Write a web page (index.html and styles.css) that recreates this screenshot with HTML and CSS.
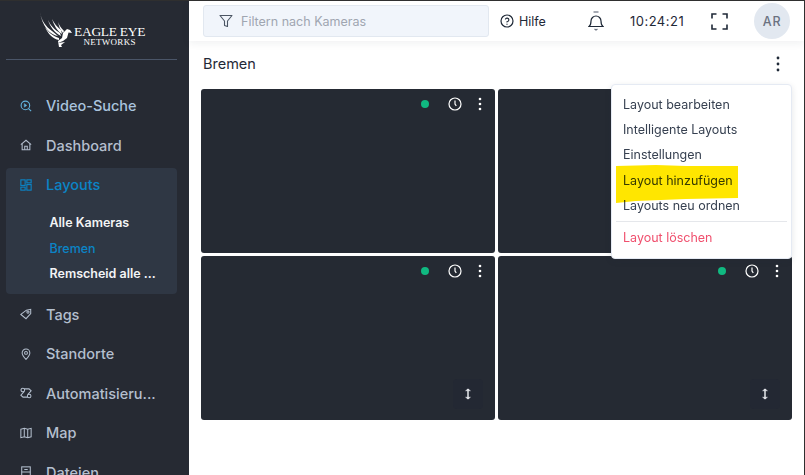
FILE: index.html
```html
<!DOCTYPE html>
<html lang="de">
<head>
<meta charset="utf-8">
<title>Eagle Eye Networks</title>
<link rel="stylesheet" href="styles.css">
</head>
<body>
<div class="shell">
  <aside class="sidebar">
    <div class="brand">
      <svg class="eagle" width="34" height="36" viewBox="0 0 34 36" fill="#fff">
        <path d="M1 0 C2 8 7 15 13 19 L19 24 C11 23 3 14 1 0Z"/>
        <path d="M6 15 C9 20 14 24 20 26 L20 28 C14 27 9 22 6 15Z"/>
        <path d="M9 8 C11 13 16 18 21 21 L22 24 C16 21 11 15 9 8Z"/>
        <path d="M13 7 C15 11 18 15 22 18 L23 22 C18 19 15 13 13 7Z"/>
        <path d="M19 10 C20 13 22 16 25 19 L24 21 C21 18 20 14 19 10Z"/>
        <path d="M24 21 L28 17 L31 18 L33 21 L29.500 20.500 L28 26 L24 29 L19 31 L26 30 L22 33 L23 35 L20 35 L19 29 L23 26 Z"/>
      </svg>
      <div class="wordmark">
        <span class="word-top">EAGLE EYE</span>
        <span class="word-sub">NETWORKS</span>
      </div>
    </div>
    <nav class="nav">
      <a class="nav-item is-search">
        <svg class="nav-icon" viewBox="0 0 14 14" fill="none" stroke="currentColor" stroke-width="1.300"><circle cx="6.300" cy="6.300" r="5"/><path d="M10 10l3 3"/><path d="M5 4.200l3 2.100-3 2.100z" fill="currentColor" stroke-width=".5"/></svg>
        <span>Video-Suche</span>
      </a>
      <a class="nav-item">
        <svg class="nav-icon" viewBox="0 0 14 14" fill="none" stroke="currentColor" stroke-width="1.200"><path d="M1 6.500L7 1.500l6 5"/><path d="M2.500 5.500V12.500h9V5.500"/><path d="M5.500 12.500V8.500h3v4"/></svg>
        <span>Dashboard</span>
      </a>
      <div class="group">
        <a class="nav-item is-active">
          <svg class="nav-icon" viewBox="0 0 14 14" fill="none" stroke="currentColor" stroke-width="1.300"><rect x="1" y="1" width="5" height="6.500"/><rect x="8" y="1" width="5" height="3.500"/><rect x="1" y="9.500" width="5" height="3.500"/><rect x="8" y="6.500" width="5" height="6.500"/></svg>
          <span>Layouts</span>
        </a>
        <ul class="sub">
          <li>Alle Kameras</li>
          <li class="is-current">Bremen</li>
          <li>Remscheid alle ...</li>
        </ul>
      </div>
      <a class="nav-item">
        <svg class="nav-icon" viewBox="0 0 14 14" fill="none" stroke="currentColor" stroke-width="1.200"><path d="M1 7.500L7.500 2.500 12.500 1.500 12.500 6.500 7 12.500z"/><circle cx="9.300" cy="4.800" r="1.300"/></svg>
        <span>Tags</span>
      </a>
      <a class="nav-item">
        <svg class="nav-icon" viewBox="0 0 14 14" fill="none" stroke="currentColor" stroke-width="1.200"><path d="M7 13.300C4 10 2.500 8 2.500 5.700a4.500 4.500 0 0 1 9 0C11.500 8 10 10 7 13.300z"/><circle cx="7" cy="5.700" r="1.700"/></svg>
        <span>Standorte</span>
      </a>
      <a class="nav-item">
        <svg class="nav-icon" viewBox="0 0 14 14" fill="none" stroke="currentColor" stroke-width="1.200"><circle cx="3.300" cy="3.500" r="2.100"/><circle cx="10.700" cy="10.500" r="2.100"/><path d="M5 2.200h5.500L13 4.500 9 9"/><path d="M9 11.800H3.500L1 9.500 5 5"/></svg>
        <span>Automatisieru...</span>
      </a>
      <a class="nav-item">
        <svg class="nav-icon" viewBox="0 0 14 14" fill="none" stroke="currentColor" stroke-width="1.200"><path d="M1 2.500l4-1 4 1 4-1v10l-4 1-4-1-4 1z"/><path d="M5 1.500v10M9 2.500v10"/></svg>
        <span>Map</span>
      </a>
      <a class="nav-item">
        <svg class="nav-icon" viewBox="0 0 14 14" fill="none" stroke="currentColor" stroke-width="1.200"><rect x="2" y="1" width="10" height="12"/><path d="M2 7h10M5 4h4"/></svg>
        <span>Dateien</span>
      </a>
    </nav>
  </aside>

  <div class="main">
    <header class="topbar">
      <label class="filter">
        <svg class="filter-icon" width="14" height="14" viewBox="0 0 14 14" fill="none" stroke="#4b5563" stroke-width="1.100" stroke-linejoin="round"><path d="M1 1.500h12L8.500 7v5.500l-3-1V7z"/></svg>
        <span>Filtern nach Kameras</span>
      </label>
      <div class="help">
        <svg width="14" height="14" viewBox="0 0 14 14" fill="none" stroke="#1f2937" stroke-width="1.200"><circle cx="7" cy="7" r="6"/><path d="M5.300 5.500A1.800 1.800 0 1 1 7 7.700v.8" stroke-width="1.100"/><circle cx="7" cy="10.200" r=".4" stroke-width=".6"/></svg>
        <span>Hilfe</span>
      </div>
      <svg class="bell" width="16" height="20" viewBox="0 0 16 20" fill="none" stroke="#1f2937" stroke-width="1.200"><path d="M5.500 1h5" stroke="#6b7280"/><path d="M1 15.500c1.500-1 2-2.500 2-5.500a5 5 0 0 1 10 0c0 3 .5 4.500 2 5.500z"/><path d="M6.500 18l1.500 1 1.500-1" stroke="#6b7280"/></svg>
      <time class="clock">10:24:21</time>
      <svg class="fullscreen" width="17" height="17" viewBox="0 0 17 17" fill="none" stroke="#1f2937" stroke-width="1.600"><path d="M1 5.500V1h4.500M11.500 1H16v4.500M16 11.500V16h-4.500M5.500 16H1v-4.500"/></svg>
      <div class="avatar">AR</div>
    </header>

    <section class="content">
      <div class="title-row">
        <h1>Bremen</h1>
        <svg class="kebab-dark" width="4" height="16" viewBox="0 0 4 16" fill="#1f2937"><circle cx="2" cy="2" r="1.400"/><circle cx="2" cy="8" r="1.400"/><circle cx="2" cy="14" r="1.400"/></svg>
      </div>

      <div class="tiles">
        <article class="tile">
          <div class="tile-top">
            <i class="dot"></i>
            <svg class="clock-icon" width="14" height="14" viewBox="0 0 14 14" fill="none" stroke="#fff" stroke-width="1.200"><circle cx="7" cy="7" r="6"/><path d="M7 3.500V7l1.300 1.800"/></svg>
            <svg class="kebab" width="4" height="14" viewBox="0 0 4 14" fill="#fff"><circle cx="2" cy="2" r="1.300"/><circle cx="2" cy="7" r="1.300"/><circle cx="2" cy="12" r="1.300"/></svg>
          </div>
        </article>
        <article class="tile">
          <div class="tile-top">
            <i class="dot"></i>
            <svg class="clock-icon" width="14" height="14" viewBox="0 0 14 14" fill="none" stroke="#fff" stroke-width="1.200"><circle cx="7" cy="7" r="6"/><path d="M7 3.500V7l1.300 1.800"/></svg>
            <svg class="kebab" width="4" height="14" viewBox="0 0 4 14" fill="#fff"><circle cx="2" cy="2" r="1.300"/><circle cx="2" cy="7" r="1.300"/><circle cx="2" cy="12" r="1.300"/></svg>
          </div>
        </article>
        <article class="tile">
          <div class="tile-top">
            <i class="dot"></i>
            <svg class="clock-icon" width="14" height="14" viewBox="0 0 14 14" fill="none" stroke="#fff" stroke-width="1.200"><circle cx="7" cy="7" r="6"/><path d="M7 3.500V7l1.300 1.800"/></svg>
            <svg class="kebab" width="4" height="14" viewBox="0 0 4 14" fill="#fff"><circle cx="2" cy="2" r="1.300"/><circle cx="2" cy="7" r="1.300"/><circle cx="2" cy="12" r="1.300"/></svg>
          </div>
          <div class="tile-bottom">
            <div class="resize">
              <svg width="8" height="12" viewBox="0 0 8 12" fill="none" stroke="#e5e7eb" stroke-width="1.500"><path d="M4 1v10"/><path d="M1.500 2.800L4 .8 6.500 2.800zM1.500 9.200L4 11.200 6.500 9.200z" fill="#e5e7eb" stroke-width=".4"/></svg>
            </div>
          </div>
        </article>
        <article class="tile">
          <div class="tile-top">
            <i class="dot"></i>
            <svg class="clock-icon" width="14" height="14" viewBox="0 0 14 14" fill="none" stroke="#fff" stroke-width="1.200"><circle cx="7" cy="7" r="6"/><path d="M7 3.500V7l1.300 1.800"/></svg>
            <svg class="kebab" width="4" height="14" viewBox="0 0 4 14" fill="#fff"><circle cx="2" cy="2" r="1.300"/><circle cx="2" cy="7" r="1.300"/><circle cx="2" cy="12" r="1.300"/></svg>
          </div>
          <div class="tile-bottom">
            <div class="resize">
              <svg width="8" height="12" viewBox="0 0 8 12" fill="none" stroke="#e5e7eb" stroke-width="1.500"><path d="M4 1v10"/><path d="M1.500 2.800L4 .8 6.500 2.800zM1.500 9.200L4 11.200 6.500 9.200z" fill="#e5e7eb" stroke-width=".4"/></svg>
            </div>
          </div>
        </article>
      </div>

      <div class="menu">
        <div class="menu-item">Layout bearbeiten</div>
        <div class="menu-item">Intelligente Layouts</div>
        <div class="menu-item">Einstellungen</div>
        <div class="menu-item">Layout hinzufügen</div>
        <div class="menu-item">Layouts neu ordnen</div>
        <hr class="menu-rule">
        <div class="menu-item is-danger">Layout löschen</div>
        <svg class="marker" width="122" height="40" viewBox="0 0 122 40"><path d="M0 1L40 0 70 1 122 1 122 33 70 34 20 36 0 38z" fill="#ffe600"/></svg>
      </div>
    </section>
  </div>
</div>
</body>
</html>
```

FILE: styles.css
```css
* { box-sizing: border-box; }
html, body { margin: 0; height: 100%; overflow: hidden; background: #fff; }
body { font-family: Inter, "Liberation Sans", sans-serif; color: #1f2937; }

.shell {
  display: flex;
  height: 475px;
  border-top: 1px solid #2f2f2f;
  border-right: 1px solid #2f2f2f;
  overflow: hidden;
}

/* Sidebar */
.sidebar {
  flex: 0 0 189px;
  background: #262a33;
  padding: 0 12px 0 6px;
  overflow: hidden;
}
.brand {
  height: 59px;
  display: flex;
  align-items: flex-start;
  padding: 11px 0 0 33px;
  border-bottom: 1px solid #4a5568;
}
.eagle { flex: none; }
.wordmark {
  display: flex;
  flex-direction: column;
  align-items: center;
  margin: 13px 0 0 1px;
  font-family: "Liberation Serif", serif;
  color: #fff;
  line-height: 1;
  white-space: nowrap;
}
.word-top { font-size: 13.500px; letter-spacing: -.3px; height: 12px; }
.word-sub { font-size: 9px; letter-spacing: .3px; margin-top: 1px; }

.nav { padding-top: 26px; }
.nav-item {
  display: flex;
  align-items: center;
  height: 39.500px;
  padding-left: 14px;
  font-size: 14.500px;
  font-weight: 500;
  color: #b4bfce;
  white-space: nowrap;
}
.nav-icon { width: 12px; height: 12px; flex: none; margin-right: 14px; color: #b4bfce; }
.is-search, .is-search .nav-icon { color: #63b3dd; }
.is-search span { color: #a9c3de; }

.group {
  background: #2f3744;
  border-radius: 4px;
  height: 126px;
  margin: 3px 0 .4px;
}
.is-active { color: #0b84c6; height: 33px; }
.is-active .nav-icon { color: #0b84c6; }
.sub {
  list-style: none;
  margin: 0;
  padding: 9px 0 0 43.500px;
  font-size: 12.500px;
  font-weight: 600;
  color: #f3f4f6;
}
.sub li { height: 25.600px; line-height: 25.600px; white-space: nowrap; }
.sub .is-current { color: #0b84c6; font-weight: 500; }

/* Main column */
.main { flex: 1; min-width: 0; display: flex; flex-direction: column; }
.topbar {
  flex: none;
  height: 40px;
  display: flex;
  align-items: center;
  padding-left: 14px;
  background: #fff;
  box-shadow: 0 2px 8px rgba(31, 41, 55, .07);
  position: relative;
  z-index: 1;
}
.filter {
  width: 286px;
  height: 32px;
  display: flex;
  align-items: center;
  padding-left: 15px;
  background: #f1f5fb;
  border: 1px solid #e2e8f0;
  border-radius: 3px;
  font-size: 12.500px;
  color: #a0a6b1;
}
.filter-icon { margin-right: 8px; }
.help {
  display: flex;
  align-items: center;
  gap: 5px;
  margin-left: 11px;
  font-size: 12.500px;
  font-weight: 400;
  color: #1f2937;
}
.bell { margin-left: 42px; }
.clock { margin-left: 26px; font-size: 13px; letter-spacing: .5px; color: #1f2937; }
.fullscreen { margin-left: 27px; }
.avatar {
  width: 36px;
  height: 36px;
  margin-left: 26px;
  border-radius: 50%;
  background: #e2e8f0;
  color: #6b7280;
  font-size: 12.500px;
  font-weight: 500;
  letter-spacing: 1px;
  display: flex;
  align-items: center;
  justify-content: center;
}

.content { position: relative; flex: 1; padding: 0 12px; }
.title-row {
  height: 48px;
  display: flex;
  align-items: center;
  justify-content: space-between;
  padding: 0 12px 3px 2px;
}
h1 { margin: 0; font-size: 14.500px; font-weight: 400; color: #1f2937; }

.tiles {
  display: grid;
  grid-template-columns: 294px 294px;
  grid-template-rows: 164px 164px;
  gap: 3px;
}
.tile {
  display: flex;
  flex-direction: column;
  justify-content: space-between;
  background: #252a33;
  border-radius: 3px;
}
.tile-top {
  display: flex;
  align-items: center;
  justify-content: flex-end;
  height: 14px;
  margin: 8px 13px 0 0;
}
.dot { width: 8px; height: 8px; border-radius: 50%; background: #10b981; margin-right: 19px; }
.clock-icon { margin-right: 16px; }
.tile-bottom { display: flex; justify-content: flex-end; padding: 0 12px 11px 0; }
.resize {
  width: 30px;
  height: 30px;
  border-radius: 4px;
  background: #232833;
  display: flex;
  align-items: center;
  justify-content: center;
}

/* Overflow menu */
.menu {
  position: absolute;
  top: 43px;
  left: 422px;
  width: 181px;
  height: 175px;
  padding-top: 7px;
  background: #fff;
  border: 1px solid #e5eaf3;
  border-radius: 4px;
  box-shadow: 0 2px 6px rgba(31, 41, 55, .12);
  font-size: 12.500px;
  color: #374151;
  z-index: 2;
}
.menu-item { position: relative; z-index: 1; height: 25.200px; line-height: 25px; padding-left: 11px; white-space: nowrap; mix-blend-mode: multiply; }
.menu-rule { margin: 3px 4px; border: 0; border-top: 1px solid #e5e7eb; }
.is-danger { color: #f0506e; }
.marker { position: absolute; left: 4px; top: 80px; }
```
